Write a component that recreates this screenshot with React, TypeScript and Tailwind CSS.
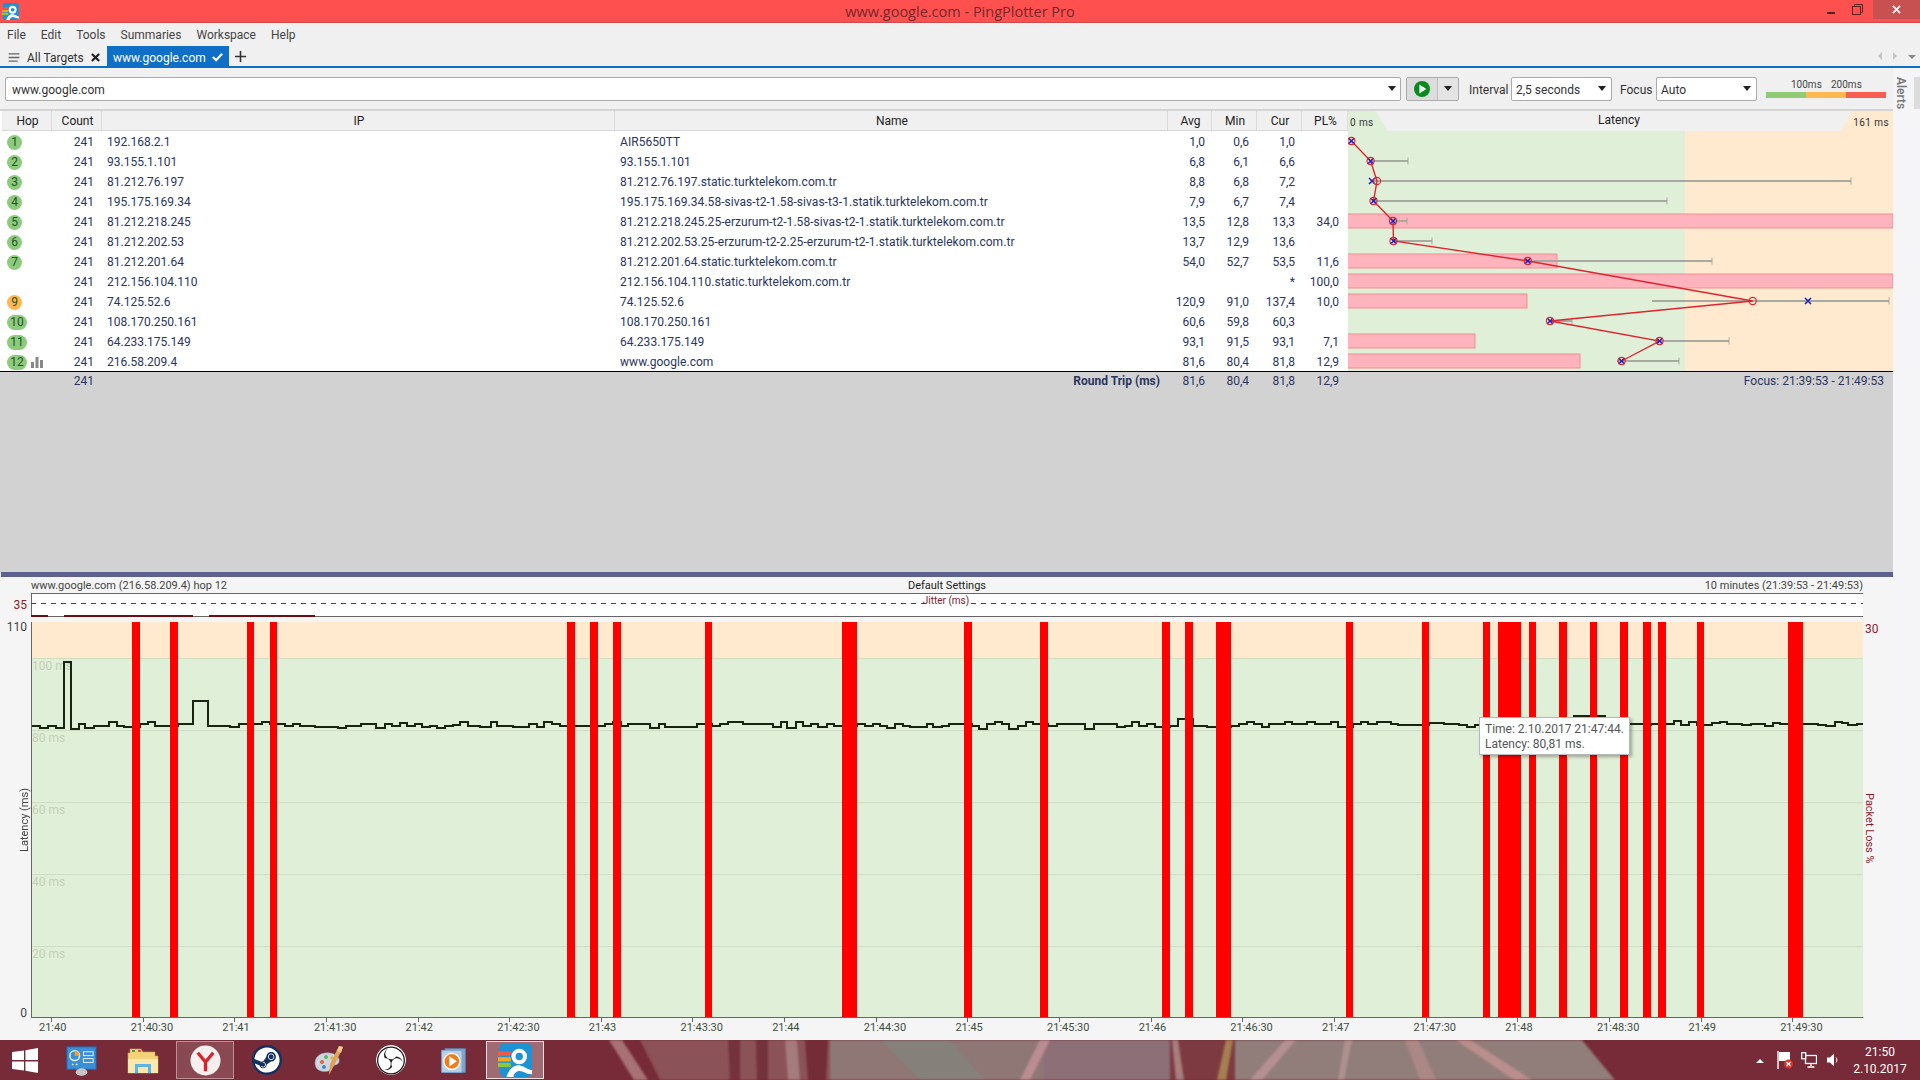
import { FaSteam } from 'react-icons/fa';
import { SiObsstudio } from 'react-icons/si';

const hops = [
  { hop: '1', ip: '192.168.2.1', name: 'AIR5650TT', avg: '1,0', min: '0,6', cur: '1,0', pl: '' },
  { hop: '2', ip: '93.155.1.101', name: '93.155.1.101', avg: '6,8', min: '6,1', cur: '6,6', pl: '' },
  { hop: '3', ip: '81.212.76.197', name: '81.212.76.197.static.turktelekom.com.tr', avg: '8,8', min: '6,8', cur: '7,2', pl: '' },
  { hop: '4', ip: '195.175.169.34', name: '195.175.169.34.58-sivas-t2-1.58-sivas-t3-1.statik.turktelekom.com.tr', avg: '7,9', min: '6,7', cur: '7,4', pl: '' },
  { hop: '5', ip: '81.212.218.245', name: '81.212.218.245.25-erzurum-t2-1.58-sivas-t2-1.statik.turktelekom.com.tr', avg: '13,5', min: '12,8', cur: '13,3', pl: '34,0' },
  { hop: '6', ip: '81.212.202.53', name: '81.212.202.53.25-erzurum-t2-2.25-erzurum-t2-1.statik.turktelekom.com.tr', avg: '13,7', min: '12,9', cur: '13,6', pl: '' },
  { hop: '7', ip: '81.212.201.64', name: '81.212.201.64.static.turktelekom.com.tr', avg: '54,0', min: '52,7', cur: '53,5', pl: '11,6' },
  { hop: '', ip: '212.156.104.110', name: '212.156.104.110.static.turktelekom.com.tr', avg: '', min: '', cur: '*', pl: '100,0' },
  { hop: '9', ip: '74.125.52.6', name: '74.125.52.6', avg: '120,9', min: '91,0', cur: '137,4', pl: '10,0' },
  { hop: '10', ip: '108.170.250.161', name: '108.170.250.161', avg: '60,6', min: '59,8', cur: '60,3', pl: '' },
  { hop: '11', ip: '64.233.175.149', name: '64.233.175.149', avg: '93,1', min: '91,5', cur: '93,1', pl: '7,1' },
  { hop: '12', ip: '216.58.209.4', name: 'www.google.com', avg: '81,6', min: '80,4', cur: '81,8', pl: '12,9' },
];

const columns = 'grid grid-cols-[50px_50px_513px_553px_44px_45px_45px_46px]';

// page coordinates, read off the reference
const lossBars = [
  [1348, 221, 1893],
  [1348, 261, 1557],
  [1348, 281, 1893],
  [1348, 301, 1527],
  [1348, 341, 1475],
  [1348, 361, 1580],
];
const whiskers = [
  [1370, 161, 1408],
  [1372, 181, 1851],
  [1373, 201, 1667],
  [1393, 221, 1407],
  [1393, 241, 1432],
  [1527, 261, 1712],
  [1652, 301, 1889],
  [1550, 321, 1572],
  [1655, 341, 1729],
  [1617, 361, 1679],
];
const avgPoints = [
  [1351.4, 141], [1370.6, 161], [1377, 181], [1373.5, 201], [1393, 221], [1393.5, 241],
  [1527.8, 261], [1752.7, 301], [1550, 321], [1659.6, 341], [1621.6, 361],
];
const curPoints = [
  [1351.4, 141], [1370.6, 161], [1372, 181], [1373.5, 201], [1393, 221], [1393.5, 241],
  [1527.8, 261], [1808, 301], [1550, 321], [1659.6, 341], [1621.6, 361],
];

const redBars = [
  [132, 140], [170, 178], [247, 254], [270, 277], [567, 575], [590, 598], [613, 621], [705, 712],
  [842, 857], [964, 972], [1040, 1048], [1162, 1170], [1185, 1193], [1216, 1231], [1346, 1353],
  [1422, 1429], [1483, 1490], [1498, 1521], [1529, 1536], [1559, 1567], [1590, 1597], [1620, 1628],
  [1643, 1651], [1658, 1666], [1697, 1704], [1788, 1803],
];

const trace = [
  [31, 726], [40, 728], [48, 726], [56, 728], [64, 662], [71, 729], [79, 724], [85, 728], [94, 726], [109, 722],
  [117, 726], [124, 727], [140, 724], [148, 722], [155, 726], [170, 726], [178, 724], [193, 701], [208, 726], [230, 727],
  [239, 724], [262, 722], [270, 724], [285, 726], [293, 724], [300, 726], [315, 727], [338, 728], [346, 726], [361, 724],
  [376, 728], [385, 724], [392, 726], [400, 723], [407, 726], [415, 724], [422, 727], [430, 726], [437, 728], [445, 726],
  [453, 725], [460, 722], [468, 726], [480, 727], [491, 722], [497, 726], [513, 727], [529, 724], [537, 727], [544, 722],
  [552, 724], [560, 726], [605, 724], [613, 722], [621, 726], [628, 724], [650, 728], [659, 724], [665, 727], [697, 724],
  [712, 726], [720, 724], [728, 722], [743, 724], [773, 727], [781, 722], [787, 728], [796, 722], [803, 726], [811, 724],
  [818, 727], [827, 724], [834, 726], [857, 724], [865, 726], [873, 724], [880, 726], [887, 728], [895, 724], [903, 726],
  [910, 727], [927, 724], [933, 727], [942, 726], [949, 724], [972, 726], [979, 729], [987, 724], [995, 722], [1002, 724],
  [1009, 729], [1018, 726], [1026, 722], [1033, 724], [1048, 726], [1057, 724], [1085, 729], [1094, 724], [1117, 727], [1125, 726],
  [1132, 722], [1139, 726], [1147, 724], [1155, 727], [1170, 726], [1178, 719], [1193, 726], [1207, 727], [1231, 726], [1239, 724],
  [1247, 722], [1254, 724], [1262, 727], [1269, 724], [1285, 722], [1292, 724], [1307, 722], [1315, 724], [1331, 722], [1338, 727],
  [1353, 724], [1361, 722], [1368, 724], [1377, 722], [1391, 724], [1398, 725], [1429, 723], [1444, 724], [1459, 725], [1467, 727],
  [1475, 725], [1490, 724], [1574, 716], [1605, 724], [1644, 725], [1651, 724], [1674, 721], [1681, 725], [1689, 722], [1697, 725],
  [1712, 723], [1720, 722], [1727, 724], [1742, 725], [1751, 724], [1765, 726], [1773, 723], [1780, 724], [1818, 725], [1826, 726],
  [1835, 722], [1842, 723], [1848, 725], [1857, 724],
];
const tracePath = trace.map(([x, y], i) => (i === 0 ? `M${x},${y}` : `H${x}V${y}`)).join('') + 'H1863';

const timeLabels = [
  '21:40', '21:40:30', '21:41', '21:41:30', '21:42', '21:42:30', '21:43', '21:43:30', '21:44', '21:44:30',
  '21:45', '21:45:30', '21:46', '21:46:30', '21:47', '21:47:30', '21:48', '21:48:30', '21:49', '21:49:30',
];

function Caret() {
  return <span className="h-0 w-0 border-x-[4px] border-t-[5px] border-x-transparent border-t-[#222]" />;
}

function Dropdown({ label, width }: { label: string; width: string }) {
  return (
    <div className={`flex h-[24px] items-center justify-between rounded-[2px] border border-[#ababab] bg-white pl-[4px] pr-[5px] ${width}`}>
      <span className="pt-[2px]">{label}</span>
      <Caret />
    </div>
  );
}

function HopBadge({ hop }: { hop: string }) {
  if (!hop) return null;
  const wide = hop.length > 1;
  return (
    <span
      className={`flex h-[15px] items-center justify-center rounded-full text-[12px] leading-none text-[#28502a] ${wide ? 'w-[20px]' : 'w-[15px]'} ${
        hop === '9' ? 'bg-[#ffb84f]' : 'bg-[#8ccb7c]'
      }`}
    >
      {hop}
    </span>
  );
}

function LatencyChart() {
  return (
    <svg viewBox="1348 111 545 260" className="block h-[260px] w-[545px] shrink-0">
      <rect x="1348" y="111" width="545" height="20" fill="#f0f0f0" />
      <polygon points="1348,111 1375,111 1388,131 1348,131" fill="#e0efd7" />
      <polygon points="1852,111 1893,111 1893,131 1841,131" fill="#ffeacf" />
      <rect x="1348" y="131" width="337" height="240" fill="#e0efd7" />
      <rect x="1685" y="131" width="208" height="240" fill="#ffeacf" />
      <text x="1350" y="126" fontSize="10" fill="#333" letterSpacing="0.4">0 ms</text>
      <text x="1619" y="124" fontSize="12" fill="#222" textAnchor="middle">Latency</text>
      <text x="1889" y="126" fontSize="10" fill="#333" textAnchor="end" letterSpacing="0.4">161 ms</text>
      {lossBars.map(([x, y, end]) => (
        <rect key={y} x={x - 1} y={y - 7} width={end - x + 1} height={14} fill="#ffb3bd" stroke="#f08f8f" />
      ))}
      {whiskers.map(([x, y, end]) => (
        <g key={y} stroke="#a7aaa0">
          <line x1={x} y1={y} x2={end} y2={y} strokeWidth="2" />
          <line x1={end} y1={y - 3.5} x2={end} y2={y + 3.5} strokeWidth="1" />
        </g>
      ))}
      <polyline points={avgPoints.map((p) => p.join(',')).join(' ')} fill="none" stroke="#dd2530" strokeWidth="1.4" />
      {curPoints.map(([x, y]) => (
        <path key={y} d={`M${x - 3},${y - 3}L${x + 3},${y + 3}M${x + 3},${y - 3}L${x - 3},${y + 3}`} stroke="#2222c4" strokeWidth="1.6" />
      ))}
      {avgPoints.map(([x, y]) => (
        <circle key={y} cx={x} cy={y} r="3.6" fill="none" stroke="#dd2530" strokeWidth="1.1" />
      ))}
    </svg>
  );
}

function JitterStrip() {
  return (
    <svg viewBox="31 593 1832 24" className="block h-[24px] w-[1832px]">
      <rect x="31" y="593" width="1832" height="24" fill="#fff" />
      <line x1="31" y1="593.5" x2="1863" y2="593.5" stroke="#666" />
      <line x1="31" y1="616.5" x2="1863" y2="616.5" stroke="#666" />
      <line x1="31.5" y1="593" x2="31.5" y2="617" stroke="#666" />
      <line x1="31" y1="603.5" x2="1863" y2="603.5" stroke="#444" strokeDasharray="5 5" />
      <rect x="925" y="596" width="44" height="12" fill="#fff" />
      <text x="946" y="604" fontSize="10" fill="#7a2030" textAnchor="middle">Jitter (ms)</text>
      <rect x="31" y="615" width="17" height="2" fill="#6b0f14" />
      <rect x="64" y="615" width="129" height="2" fill="#6b0f14" />
      <rect x="209" y="615" width="106" height="2" fill="#6b0f14" />
    </svg>
  );
}

function HistoryChart() {
  const grid = [
    [730.6, '80 ms', 742],
    [802.6, '60 ms', 814],
    [874.5, '40 ms', 886],
    [946.5, '20 ms', 958],
  ] as const;
  return (
    <svg viewBox="31 622 1832 396" className="block h-[396px] w-[1832px]">
      <rect x="31" y="622" width="1832" height="36" fill="#ffeacf" />
      <rect x="31" y="658" width="1832" height="360" fill="#e0efd7" />
      <line x1="31" y1="658.5" x2="1863" y2="658.5" stroke="#d0dcc0" />
      <text x="32" y="670" fontSize="12" fill="#c4cfb9">100 ms</text>
      {grid.map(([y, label, ty]) => (
        <g key={label}>
          <line x1="31" y1={y} x2="1863" y2={y} stroke="#cfdcc3" />
          <text x="32" y={ty} fontSize="12" fill="#c4cfb9">{label}</text>
        </g>
      ))}
      <path d={tracePath} fill="none" stroke="#18240f" strokeWidth="2" />
      {redBars.map(([a, b]) => (
        <rect key={a} x={a} y="622" width={b - a} height="396" fill="#ff0000" />
      ))}
      <line x1="31.5" y1="622" x2="31.5" y2="1018" stroke="#666" />
      <line x1="31" y1="1017.5" x2="1863" y2="1017.5" stroke="#666" />
    </svg>
  );
}

function AppLogo({ size }: { size: number }) {
  return (
    <svg viewBox="0 0 24 24" width={size} height={size}>
      <rect x="1" y="0" width="23" height="24" rx="4" fill="#1c93d4" />
      <rect x="0" y="6" width="9" height="3" fill="#ef5a45" />
      <rect x="0" y="10" width="9" height="3" fill="#f6a623" />
      <rect x="0" y="14" width="9" height="3" fill="#8cc63f" />
      <circle cx="15" cy="9.5" r="5.5" fill="#fff" />
      <circle cx="15" cy="9.5" r="2.6" fill="#1c93d4" />
      <path d="M6 24 C8 17 13 15 16 16 C20 17 21 19 24 19 L24 22 C19 22 17 19 14 20 C12 21 11 22 11 24 Z" fill="#fff" />
    </svg>
  );
}

function TaskbarIcons() {
  return (
    <>
      <div className="flex w-[50px] items-center justify-center">
        <svg viewBox="0 0 26 25" className="h-[25px] w-[26px]" fill="#fff">
          <polygon points="0,4 12,2.4 12,12 0,12" />
          <polygon points="13.4,2.2 26,0 26,12 13.4,12" />
          <polygon points="0,13.4 12,13.4 12,22.6 0,21" />
          <polygon points="13.4,13.4 26,13.4 26,25 13.4,22.8" />
        </svg>
      </div>
      <div className="flex w-[62px] items-center justify-center">
        <svg viewBox="0 0 32 32" className="h-[31px] w-[31px]">
          <rect x="1" y="2" width="30" height="23" fill="#3a8fd8" stroke="#1f6fb5" />
          <circle cx="9" cy="11" r="5" fill="none" stroke="#dff1ff" strokeWidth="1.6" />
          <path d="M9 6 A5 5 0 0 1 14 11 L9 11 Z" fill="#f5a623" />
          <rect x="18" y="7" width="10" height="4" fill="none" stroke="#dff1ff" />
          <rect x="18" y="14" width="10" height="4" fill="none" stroke="#dff1ff" />
          <circle cx="7" cy="20" r="1" fill="#f5d76e" />
          <circle cx="11" cy="20" r="1" fill="#dff1ff" />
          <ellipse cx="16" cy="28" rx="6" ry="4" fill="#c5c5c5" />
        </svg>
      </div>
      <div className="flex w-[62px] items-center justify-center">
        <svg viewBox="0 0 32 32" className="h-[32px] w-[32px]">
          <path d="M1 9 H3 V5 H14 L16 8 H28 V12 H31 V29 H1 Z" fill="#f3d27a" stroke="#c9a24d" strokeWidth="0.6" />
          <rect x="5" y="6" width="3" height="2" fill="#3fa34d" />
          <rect x="11" y="6" width="3" height="2" fill="#d9534f" />
          <path d="M1 15 H31 V29 H1 Z" fill="#f9e7ae" />
          <path d="M8 29 V20 H24 V29 H21 V23 H11 V29 Z" fill="#5eb4e8" />
        </svg>
      </div>
      <div className="flex w-[62px] items-center justify-center">
        <div className="flex h-[38px] w-[58px] items-center justify-center border border-[#ffffff66] bg-[#ffffff24]">
          <svg viewBox="0 0 32 32" className="h-[31px] w-[31px]">
            <circle cx="16" cy="16" r="15.5" fill="#f6efef" />
            <path d="M8 8 L16 17.5 L24 8 M16 17.5 V27" fill="none" stroke="#d8232a" strokeWidth="3.4" />
          </svg>
        </div>
      </div>
      <div className="flex w-[62px] items-center justify-center">
        <div className="flex h-[30px] w-[30px] items-center justify-center rounded-full bg-[#14305e] text-white">
          <FaSteam className="h-[26px] w-[26px]" />
        </div>
      </div>
      <div className="flex w-[62px] items-center justify-center">
        <svg viewBox="0 0 32 32" className="h-[32px] w-[32px]">
          <path d="M2 19 C2 11 10 8 17 9 C24 10 27 14 26 18 C25 22 20 20 19 23 C18 28 12 28 8 27 C4 26 2 23 2 19 Z" fill="#cfd6df" stroke="#8b95a3" strokeWidth="0.6" />
          <circle cx="9" cy="18" r="2" fill="#e0603f" />
          <circle cx="13" cy="13" r="2" fill="#5cb85c" />
          <circle cx="19" cy="14" r="1.8" fill="#e8b73a" />
          <circle cx="11" cy="23" r="1.9" fill="#3f7fc8" />
          <path d="M26 2 L30 3 L23 18 L16 31 L17 20 Z" fill="#e0a35a" />
          <path d="M26 2 L30 3 L28 9 L24 7 Z" fill="#f1c88e" />
        </svg>
      </div>
      <div className="flex w-[62px] items-center justify-center">
        <div className="flex h-[30px] w-[30px] items-center justify-center rounded-full border border-white bg-white text-[#1c1c1c]">
          <SiObsstudio className="h-[29px] w-[29px]" />
        </div>
      </div>
      <div className="flex w-[62px] items-center justify-center">
        <svg viewBox="0 0 32 32" className="h-[27px] w-[27px]">
          <rect x="6" y="2" width="24" height="28" fill="#7fa6cf" stroke="#5b84ad" />
          <rect x="2" y="4" width="24" height="26" fill="#bcd0e4" stroke="#7fa6cf" />
          <circle cx="14" cy="17" r="9.5" fill="#f07d1a" stroke="#fff" strokeWidth="1.6" />
          <polygon points="11,11 20,17 11,23" fill="#fff" />
        </svg>
      </div>
      <div className="flex w-[62px] items-center justify-center">
        <div className="flex h-[38px] w-[58px] items-center justify-center border border-[#ffffffcc] bg-[#ffffff4d]">
          <AppLogo size={34} />
        </div>
      </div>
    </>
  );
}

// soft wallpaper showing through the translucent taskbar
const wallpaper: [string, string][] = [
  ['640,0 830,0 830,40 660,40', '#8b5257'],
  ['830,0 1044,0 1044,40 830,40', '#8f7775'],
  ['880,0 950,0 985,40 920,40', '#86807b'],
  ['1044,0 1170,0 1170,40 1044,40', '#8c6f77'],
  ['1170,0 1235,0 1235,40 1170,40', '#7d3a40'],
  ['1235,0 1582,0 1615,40 1235,40', '#917e7a'],
  ['609,0 622,0 648,40 634,40', '#a67276'],
  ['728,0 740,0 740,40 730,40', '#74323c'],
  ['756,0 768,0 768,40 757,40', '#74323c'],
  ['785,0 797,0 800,40 788,40', '#a47c7e'],
  ['805,0 828,0 826,40 808,40', '#742c36'],
  ['1040,0 1050,0 1030,40 1020,40', '#bb8d92'],
  ['1172,0 1178,0 1184,40 1176,40', '#a87e80'],
  ['1226,0 1233,0 1226,40 1217,40', '#a67f52'],
  ['1285,0 1296,0 1262,40 1250,40', '#b59092'],
  ['1345,0 1352,0 1344,40 1338,40', '#ae9290'],
  ['1405,0 1418,0 1436,40 1420,40', '#ab8886'],
  ['1456,0 1470,0 1532,40 1514,40', '#b98f8c'],
];

export default function App() {
  return (
    <div className="flex h-[1080px] w-[1920px] flex-col overflow-hidden bg-[#f0f0f0] font-[Roboto,sans-serif] text-[12px] leading-none text-[#333]">
      {/* title bar */}
      <div className="relative flex h-[23px] shrink-0 items-center justify-center border-b border-[#c94b4b] bg-[#ff5050]">
        <div className="absolute left-[2px] top-[3px]">
          <AppLogo size={17} />
        </div>
        <span className="pt-[2px] font-['Open_Sans',sans-serif] text-[14.5px] text-[#74282c]">www.google.com - PingPlotter Pro</span>
        <div className="absolute right-0 top-0 flex h-[19px] items-center">
          <span className="mr-[17px] mt-[6px] h-[2px] w-[8px] bg-[#4d2020]" />
          <svg viewBox="0 0 11 11" className="mr-[10px] h-[11px] w-[11px]" fill="none" stroke="#5a2525">
            <rect x="0.5" y="2.5" width="8" height="8" />
            <path d="M2.5 2.5V0.5H10.5V8.5H8.5" />
          </svg>
          <span className="flex h-[19px] w-[47px] items-center justify-center bg-[#c75050]">
            <svg viewBox="0 0 10 10" className="h-[9px] w-[9px]" stroke="#fff" strokeWidth="1.8">
              <path d="M1 1L9 9M9 1L1 9" />
            </svg>
          </span>
        </div>
      </div>

      {/* menu */}
      <div className="flex h-[23px] shrink-0 items-center gap-[15px] pl-[7px] text-[#444]">
        {['File', 'Edit', 'Tools', 'Summaries', 'Workspace', 'Help'].map((m) => (
          <span key={m}>{m}</span>
        ))}
      </div>

      {/* tabs */}
      <div className="flex h-[20px] shrink-0 items-center text-[12px]">
        <svg viewBox="0 0 12 10" className="ml-[8px] mt-[2px] h-[9px] w-[12px]" stroke="#666" strokeWidth="1.4">
          <path d="M0 1H12M0 5H12M0 9H10" />
        </svg>
        <span className="ml-[7px] mt-[4px] w-[64px] text-[#333]">All Targets</span>
        <svg viewBox="0 0 10 10" className="mt-[3px] h-[9px] w-[9px]" stroke="#222" strokeWidth="2.4">
          <path d="M1 1L9 9M9 1L1 9" />
        </svg>
        <div className="ml-[7px] flex h-[20px] w-[122px] items-center bg-[#0f6fc6] pl-[6px] text-white">
          <span className="mt-[4px] w-[99px]">www.google.com</span>
          <svg viewBox="0 0 12 10" className="mt-[2px] h-[10px] w-[11px]" fill="none" stroke="#fff" strokeWidth="2.4">
            <path d="M1 5L4.5 8.5L11 1.5" />
          </svg>
        </div>
        <svg viewBox="0 0 11 11" className="ml-[6px] h-[11px] w-[11px]" stroke="#333" strokeWidth="1.6">
          <path d="M5.5 0V11M0 5.5H11" />
        </svg>
        <div className="ml-auto flex items-center pr-[4px]">
          <span className="h-0 w-0 border-y-[4px] border-r-[4px] border-y-transparent border-r-[#c4c4c4]" />
          <span className="ml-[11px] h-0 w-0 border-y-[4px] border-l-[4px] border-y-transparent border-l-[#c4c4c4]" />
          <span className="ml-[11px] mt-[2px] h-0 w-0 border-x-[4px] border-t-[4px] border-x-transparent border-t-[#888]" />
        </div>
      </div>
      <div className="h-[2px] shrink-0 bg-[#0f6fc6]" />

      <div className="flex min-h-0 flex-1">
        {/* left block */}
        <div className="flex w-[1893px] shrink-0 flex-col">
          {/* toolbar */}
          <div className="flex h-[41px] shrink-0 items-center pl-[5px]">
            <div className="flex h-[24px] w-[1396px] items-center justify-between rounded-[2px] border border-[#ababab] bg-white pl-[6px] pr-[4px]">
              <span className="pt-[2px]">www.google.com</span>
              <Caret />
            </div>
            <div className="ml-[5px] flex h-[24px] w-[53px] rounded-[2px] border border-[#ababab] bg-[#e4e4e4]">
              <div className="flex w-[31px] items-center justify-center border-r border-[#c0c0c0] bg-[#dcdcdc]">
                <svg viewBox="0 0 16 16" className="h-[16px] w-[16px]">
                  <circle cx="8" cy="8" r="8" fill="#0a8a1e" />
                  <polygon points="5.4,3.6 12.4,8 5.4,12.4" fill="#f2fbf2" />
                </svg>
              </div>
              <div className="flex flex-1 items-center justify-center">
                <Caret />
              </div>
            </div>
            <span className="ml-[10px] w-[42px] pt-[2px]">Interval</span>
            <Dropdown label="2,5 seconds" width="w-[101px]" />
            <span className="ml-[8px] w-[36px] pt-[2px]">Focus</span>
            <Dropdown label="Auto" width="w-[101px]" />
            <div className="ml-[9px] flex w-[120px] flex-col pt-[1px]">
              <div className="flex pl-[25px] text-[10px] text-[#444]">
                <span className="w-[40px]">100ms</span>
                <span>200ms</span>
              </div>
              <div className="mt-[2px] flex h-[6px]">
                <span className="w-[40px] bg-[#92cb75]" />
                <span className="w-[40px] bg-[#fdb94f]" />
                <span className="w-[40px] bg-[#f85f52]" />
              </div>
            </div>
          </div>
          <div className="h-[2px] shrink-0 bg-[#d4d4d4]" />

          {/* trace table + latency */}
          <div className="flex shrink-0">
            <div className="w-[1348px] shrink-0 bg-white pl-[2px] text-[#2a3560]">
              <div className={`${columns} h-[20px] items-center border-b border-[#d8d8d8] bg-[#f0f0f0] text-center text-[#222] [&>span]:flex [&>span]:h-[19px] [&>span]:items-center [&>span]:justify-center [&>span]:border-r [&>span]:border-[#dcdcdc] [&>span]:pl-[2px] [&>span]:pt-[1px]`}>
                <span>Hop</span>
                <span>Count</span>
                <span>IP</span>
                <span>Name</span>
                <span>Avg</span>
                <span>Min</span>
                <span>Cur</span>
                <span>PL%</span>
              </div>
              {hops.map((row) => (
                <div key={row.ip} className={`${columns} h-[20px] items-center pt-[2px]`}>
                  <span className="flex items-center pl-[5px]">
                    <HopBadge hop={row.hop} />
                    {row.hop === '12' && (
                      <svg viewBox="0 0 12 11" className="ml-[4px] h-[11px] w-[12px]" fill="#888">
                        <rect x="0" y="5" width="3" height="6" />
                        <rect x="4.5" y="0" width="3" height="11" />
                        <rect x="9" y="3" width="3" height="8" />
                      </svg>
                    )}
                  </span>
                  <span className="pr-[8px] text-right">241</span>
                  <span className="pl-[5px]">{row.ip}</span>
                  <span className="pl-[5px] tracking-[0.05px]">{row.name}</span>
                  <span className="pr-[7px] text-right">{row.avg}</span>
                  <span className="pr-[8px] text-right">{row.min}</span>
                  <span className="pr-[7px] text-right">{row.cur}</span>
                  <span className="pr-[9px] text-right">{row.pl}</span>
                </div>
              ))}
            </div>
            <LatencyChart />
          </div>

          {/* summary + empty grey space */}
          <div className="min-h-0 flex-1 border-t border-black bg-[#d2d2d2] pl-[2px] text-[#2a3560]">
            <div className="flex h-[18px] items-center">
              <div className={`${columns} w-[1346px] shrink-0 items-center`}>
                <span />
                <span className="pr-[8px] text-right">241</span>
                <span />
                <span className="pr-[8px] text-right font-bold">Round Trip (ms)</span>
                <span className="pr-[7px] text-right">81,6</span>
                <span className="pr-[8px] text-right">80,4</span>
                <span className="pr-[7px] text-right">81,8</span>
                <span className="pr-[9px] text-right">12,9</span>
              </div>
              <span className="flex-1 pr-[9px] text-right">Focus: 21:39:53 - 21:49:53</span>
            </div>
          </div>
          <div className="ml-[1px] h-[5px] shrink-0 bg-[#5d6190]" />

          {/* history panel */}
          <div className="flex h-[463px] shrink-0 flex-col bg-[#f5f5f5] text-[11px] text-[#444]">
            <div className="grid h-[16px] shrink-0 grid-cols-3 items-center pl-[31px] pr-[30px]">
              <span>www.google.com (216.58.209.4) hop 12</span>
              <span className="text-center text-[#222]">Default Settings</span>
              <span className="text-right">10 minutes (21:39:53 - 21:49:53)</span>
            </div>
            <div className="flex h-[24px] shrink-0">
              <div className="flex w-[31px] items-center justify-end pr-[4px] text-[12px] text-[#8b1c2c]">35</div>
              <JitterStrip />
            </div>
            <div className="mt-[5px] flex h-[396px] shrink-0">
              <div className="-mb-[1px] -mt-[1px] flex w-[31px] flex-col items-end justify-between pr-[4px]">
                <span className="text-[12px]">110</span>
                <span className="-mr-[3px] rotate-180 [writing-mode:vertical-rl]">Latency (ms)</span>
                <span className="text-[12px]">0</span>
              </div>
              <div className="relative">
                <HistoryChart />
                <div className="absolute left-[1448px] top-[95px] flex h-[38px] w-[151px] flex-col justify-center gap-[3px] border border-[#b8b8b8] bg-white pl-[5px] text-[12px] text-[#555] shadow-[2px_2px_3px_rgba(0,0,0,0.3)]">
                  <span>Time: 2.10.2017 21:47:44.</span>
                  <span>Latency: 80,81 ms.</span>
                </div>
              </div>
              <div className="flex flex-1 flex-col pl-[2px] pt-[1px] text-[#8b1c2c]">
                <span className="text-[12px]">30</span>
                <span className="-ml-[1px] mt-[158px] self-start [writing-mode:vertical-rl]">Packet Loss %</span>
              </div>
            </div>
            <div className="flex pl-[39px] text-[#3f4f3f]">
              {timeLabels.map((t) => (
                <div key={t} className="w-[91.65px] shrink-0">
                  <div className="ml-[12px] h-[4px] w-px bg-[#666]" />
                  <div>{t}</div>
                </div>
              ))}
            </div>
          </div>
        </div>

        {/* alerts rail */}
        <div className="flex flex-1 justify-between bg-[#f5f5f7] pt-[9px]">
          <span className="ml-[2px] self-start font-medium text-[#777] [writing-mode:vertical-rl]">Alerts</span>
          <span className="h-[32px] w-[6px] bg-[#dcdcdc]" />
        </div>
      </div>

      {/* taskbar */}
      <div className="relative flex h-[40px] shrink-0 items-center overflow-hidden bg-[#772a37] text-white">
        <svg viewBox="0 0 1920 40" className="absolute inset-0 h-full w-full blur-[1px]">
          {wallpaper.map(([points, fill]) => (
            <polygon key={points} points={points} fill={fill} />
          ))}
        </svg>
        <div className="relative flex h-full items-center">
          <TaskbarIcons />
        </div>
        <div className="relative ml-auto flex h-full items-center">
          <span className="mt-[2px] h-0 w-0 border-x-[4px] border-b-[4px] border-x-transparent border-b-white" />
          <svg viewBox="0 0 16 18" className="ml-[13px] h-[18px] w-[16px]">
            <path d="M1 0V18" stroke="#fff" strokeWidth="1.4" />
            <path d="M2 1H13V10H2Z" fill="#fff" />
            <circle cx="11.5" cy="13" r="4.5" fill="#d9342b" />
            <path d="M9.5 11L13.5 15M13.5 11L9.5 15" stroke="#fff" strokeWidth="1.2" />
          </svg>
          <svg viewBox="0 0 16 16" className="ml-[8px] h-[16px] w-[16px]" fill="none" stroke="#fff" strokeWidth="1.3">
            <rect x="4.5" y="3.5" width="11" height="8" />
            <rect x="0.7" y="0.7" width="4" height="6" fill="#772a37" />
            <path d="M10 11.5V14M6.5 15H13.5" />
          </svg>
          <svg viewBox="0 0 14 14" className="ml-[10px] h-[14px] w-[14px]" fill="#fff">
            <path d="M0 4.5H3L7 0.5V13.5L3 9.5H0Z" />
            <path d="M9 4.5C10.2 5.8 10.2 8.2 9 9.5" fill="none" stroke="#fff" />
          </svg>
          <div className="ml-[8px] flex w-[62px] flex-col items-center gap-[5px] text-[12px]">
            <span>21:50</span>
            <span>2.10.2017</span>
          </div>
          <div className="w-[9px]" />
        </div>
      </div>
    </div>
  );
}
